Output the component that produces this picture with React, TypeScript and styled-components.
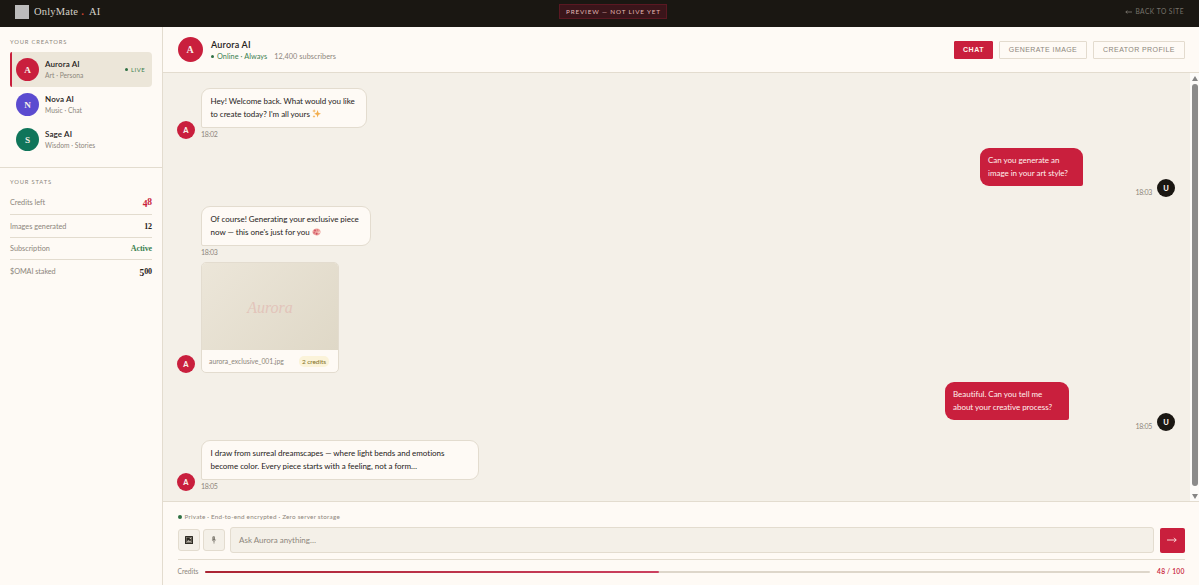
import React from 'react';
import styled, { createGlobalStyle } from 'styled-components';

const c = {
  ink: '#1a1712', paper: '#fefaf5', sand: '#f4f0e8', line: '#e3dccf',
  red: '#c91f3d', muted: '#8d867c', green: '#3c8050', text: '#252119',
};
const serif = `"Liberation Serif", serif`;

const Global = createGlobalStyle`
  *{box-sizing:border-box}
  body{margin:0;overflow:hidden;background:${c.paper};color:${c.text};font-family:Lato,"Liberation Sans",sans-serif;font-size:8px}
`;

const Label = styled.span<{ $size?: number; $ls?: number; $color?: string; $w?: number; $lh?: number }>`
  display:block;white-space:nowrap;
  font-size:${p => p.$size ?? 7}px;letter-spacing:${p => p.$ls ?? 0}px;
  color:${p => p.$color ?? c.muted};font-weight:${p => p.$w ?? 400};
  line-height:${p => p.$lh ?? 11}px;
`;

const Page = styled.div`height:585px;display:flex;flex-direction:column;`;
const TopBar = styled.header`
  height:27px;background:${c.ink};display:flex;justify-content:space-between;align-items:center;
  padding:0 15px 4px;flex:none;
`;
const Brand = styled.div`display:flex;align-items:center;gap:5px;font-family:${serif};color:#d5d1c8;`;
const BrandMark = styled.span`width:14px;height:14px;background:#bcbbbb;`;
const BrandText = styled.span`display:flex;font-size:10.5px;line-height:14px;letter-spacing:.2px;b{color:#d0452f;margin:0 5px 0 3px}`;
const Preview = styled.div`
  height:15px;border:1px solid #5a1822;background:#3a151a;display:flex;align-items:center;padding:0 5px 0 6px;
`;
const Back = styled.div`display:flex;align-items:center;gap:3px;`;

const Body = styled.div`flex:1;display:flex;min-height:0;`;
const Sidebar = styled.aside`width:163px;flex:none;border-right:1px solid ${c.line};`;
const Section = styled.section<{ $stats?: boolean }>`
  padding:${p => (p.$stats ? '8px 10px 0' : '9px 10px 10px')};
  ${p => p.$stats && `border-top:1px solid ${c.line};`}
`;
const Creators = styled.div`display:flex;flex-direction:column;margin-top:5px;`;
const Creator = styled.div<{ $active?: boolean }>`
  height:35px;display:flex;align-items:center;gap:6px;padding:0 7px 0 4px;
  border-left:2px solid ${p => (p.$active ? c.red : 'transparent')};border-radius:2px 4px 4px 2px;
  background:${p => (p.$active ? '#ece6d9' : 'transparent')};
`;
const CreatorInfo = styled.div`flex:1;padding-top:1px;`;
const Avatar = styled.div<{ $size: number; $bg: string; $serif?: boolean }>`
  width:${p => p.$size}px;height:${p => p.$size}px;border-radius:50%;background:${p => p.$bg};
  display:flex;align-items:center;justify-content:center;flex:none;color:#f8eee8;
  font-weight:${p => (p.$serif ? 700 : 900)};font-size:${p => (p.$serif ? p.$size * 0.4 : 7.5)}px;
  font-family:${p => (p.$serif ? serif : 'Lato, sans-serif')};
`;
const Stat = styled.div<{ $h: number; $top?: number }>`
  display:flex;align-items:center;justify-content:space-between;height:${p => p.$h}px;padding-top:${p => p.$top ?? 0}px;
  border-bottom:1px solid ${c.line};
  &:last-child{border-bottom:0}
`;
const StatValue = styled.span<{ $color?: string }>`
  font-family:${serif};font-weight:700;font-size:8px;letter-spacing:-.1px;color:${p => p.$color ?? c.text};display:flex;align-items:baseline;line-height:11px;
`;
const Numeral = styled.span<{ $kind: 'x' | 'down' | 'up' }>`
  font-size:${p => (p.$kind === 'x' ? 8 : 9.5)}px;
  transform:${p => (p.$kind === 'down' ? 'translateY(2px)' : 'none')};
`;

const Main = styled.main`flex:1;display:flex;flex-direction:column;min-width:0;`;
const ChatHeader = styled.div`
  height:46px;flex:none;border-bottom:1px solid ${c.line};display:flex;align-items:center;gap:8.5px;padding:0 14px 0 14.5px;
`;
const HeaderInfo = styled.div`flex:1;padding-top:1px;`;
const Inline = styled.div<{ $gap: number }>`display:flex;align-items:center;gap:${p => p.$gap}px;`;
const Tab = styled.button<{ $active?: boolean; $width: number }>`
  height:18px;width:${p => p.$width}px;padding:0;border-radius:1px;white-space:nowrap;
  border:1px solid ${p => (p.$active ? c.red : '#e3dbce')};
  background:${p => (p.$active ? c.red : 'transparent')};color:${p => (p.$active ? '#fff3ee' : c.muted)};
  font:${p => (p.$active ? 700 : 400)} 7px "Liberation Sans",sans-serif;letter-spacing:${p => (p.$active ? 0.55 : 0.42)}px;
`;
const Dot = styled.i<{ $size: number }>`
  width:${p => p.$size}px;height:${p => p.$size}px;border-radius:50%;background:#2f7043;flex:none;
`;

const Stream = styled.div`height:428px;flex:none;display:flex;background:${c.sand};`;
const Messages = styled.div`flex:1;padding:15px 15px 0 14px;display:flex;flex-direction:column;gap:9px;`;
const Row = styled.div<{ $mine?: boolean; $h: number }>`
  height:${p => p.$h}px;display:flex;align-items:flex-end;gap:${p => (p.$mine ? 5 : 6)}px;
  justify-content:${p => (p.$mine ? 'flex-end' : 'flex-start')};
`;
const Content = styled.div<{ $mine?: boolean }>`
  align-self:flex-start;display:flex;flex-direction:column;align-items:${p => (p.$mine ? 'flex-end' : 'flex-start')};
`;
const Bubble = styled.div<{ $mine?: boolean; $width: number; $inset?: number }>`
  width:${p => p.$width}px;height:${p => (p.$mine ? 38 : 40)}px;
  margin-right:${p => p.$inset ?? 0}px;
  padding:${p => (p.$mine ? '6px 8px' : '6px 8.5px')};
  border:${p => (p.$mine ? '0' : `1px solid ${c.line}`)};
  border-radius:${p => (p.$mine ? '9px 9px 2px 9px' : '9px 9px 9px 2px')};
  background:${p => (p.$mine ? c.red : c.paper)};
`;
const Card = styled.div`width:138px;height:111px;margin-top:3px;border:1px solid ${c.line};border-radius:5px;overflow:hidden;background:${c.paper};`;
const Art = styled.div`
  height:87px;background:linear-gradient(135deg,#ece6d9,#dfd8c7);display:flex;align-items:center;justify-content:center;
  font:italic 16px ${serif};color:#e2c4ba;padding-top:2px;
`;
const CardFoot = styled.div`height:22px;display:flex;align-items:center;justify-content:space-between;padding:0 9px 0 7px;`;
const Price = styled.div`background:#fbf3d9;border-radius:5px;padding:0 3px;`;

const Scroll = styled.div`width:9px;background:#fcfbf9;display:flex;flex-direction:column;align-items:center;padding:3px 0 2px 1px;gap:3px;`;
const Thumb = styled.div`width:6px;height:402px;border-radius:3px;background:#8b8b8b;`;
const Spacer = styled.div`flex:1;`;

const Composer = styled.footer`
  flex:1;border-top:1px solid ${c.line};padding:9px 14.5px 0 14.5px;display:flex;flex-direction:column;
`;
const InputRow = styled.div`display:flex;align-items:center;margin-top:5px;height:26px;`;
const Tool = styled.button`
  width:22px;height:22px;padding:0;margin-right:3px;border:1px solid ${c.line};border-radius:3px;background:${c.sand};
  display:flex;align-items:center;justify-content:center;color:#222;
`;
const Field = styled.div`
  flex:1;height:26px;margin:0 6px 0 2.5px;border:1px solid ${c.line};border-radius:3px;background:${c.sand};
  display:flex;align-items:center;padding:0 8px;
`;
const Send = styled.button`
  width:25px;height:25px;padding:0;border:0;border-radius:2px;background:${c.red};display:flex;align-items:center;justify-content:center;
`;
const CreditRow = styled.div`
  margin-top:6px;padding-top:6px;border-top:1px solid ${c.line};display:flex;align-items:center;gap:7px;
`;
const Track = styled.div`flex:1;height:2px;border-radius:1px;background:#ddd6ca;`;
const Fill = styled.div`width:48%;height:2px;border-radius:1px;background:linear-gradient(90deg,#ab2433,#cb405f);`;

const Arrow = ({ w, left, color }: { w: number; left?: boolean; color: string }) => (
  <svg width={w} height="8" viewBox={`0 0 ${w} 8`} fill="none" stroke={color} strokeWidth=".9">
    {left ? <path d={`M${w} 4H.8M2.4 2.6L.8 4L2.4 5.4`} /> : <path d={`M0 4H${w - 0.8}M${w - 3} 1.8L${w - 0.8} 4L${w - 3} 6.2`} />}
  </svg>
);
const Sparkles = () => (
  <svg width="9" height="9" viewBox="0 0 9 9" fill="#f2ae4e" style={{ verticalAlign: -1 }}>
    <path d="M5.6 1L6.5 3.7L9 4.8L6.5 5.7L5.6 8.5L4.6 5.7L2.2 4.8L4.6 3.7ZM2.1 0L2.6 1.4L4 1.9L2.6 2.4L2.1 3.7L1.6 2.4L.2 1.9L1.6 1.4ZM2 6L2.4 7.1L3.4 7.5L2.4 7.9L2 9L1.6 7.9L.6 7.5L1.6 7.1Z" />
  </svg>
);
const Palette = () => (
  <svg width="9" height="8" viewBox="0 0 9 8" style={{ verticalAlign: -1 }}>
    <path d="M4.8.5C7 .4 8.8 2 8.6 4C8.5 6 6.8 7.5 4.6 7.4C2 7.3.2 5.7.4 3.8C.6 1.8 2.4.6 4.8.5Z" fill="#eda39d" />
    <circle cx="3" cy="2.4" r="1" fill="#d65365" /><circle cx="2.2" cy="4.7" r=".9" fill="#da6874" />
    <circle cx="4.6" cy="5.8" r="1" fill="#cf4f62" /><circle cx="5.4" cy="2" r=".8" fill="#dd7074" />
    <path d="M5.1 4.2L8 3.6L7.9 4.7Z" fill="#fdf0e8" />
  </svg>
);
const Picture = () => (
  <svg width="8" height="8" viewBox="0 0 8 8">
    <rect width="8" height="8" rx=".6" fill="#29261f" />
    <rect x="1.2" y="1.2" width="5.6" height="5.6" fill="none" stroke="#aaa498" strokeWidth=".5" />
    <path d="M1.5 6.2L3.3 3.8L4.4 5L5.2 4.2L6.5 6.2Z" fill="#b5afa4" /><circle cx="5.4" cy="2.5" r=".7" fill="#c5bfb4" />
  </svg>
);
const Mic = () => (
  <svg width="6" height="8" viewBox="0 0 6 8" fill="none">
    <rect x="1.4" y=".3" width="2.6" height="4.2" rx="1.2" fill="#77736a" />
    <path d="M1.3 3.8C1.4 5.7 4.5 5.7 4.6 3.5M3 5.3V7.6" stroke="#77736a" strokeWidth=".7" />
    <path d="M2 1.4H3.5M2 2.6H3.5" stroke="#d8d2c6" strokeWidth=".4" />
  </svg>
);

const creators = [
  { name: 'Aurora AI', role: 'Art · Persona', bg: c.red, live: true },
  { name: 'Nova AI', role: 'Music · Chat', bg: '#5b4bd0' },
  { name: 'Sage AI', role: 'Wisdom · Stories', bg: '#10755a' },
];

const Line = ({ mine, children }: { mine?: boolean; children: React.ReactNode }) => (
  <Label $size={8} $ls={-0.03} $lh={13} $color={mine ? '#fff1ee' : c.text}>{children}</Label>
);
const Time = ({ children }: { children: string }) => <Label $size={7} $ls={-0.28} $lh={13}>{children}</Label>;

export default function App() {
  return (
    <Page>
      <Global />
      <TopBar>
        <Brand><BrandMark /><BrandText>OnlyMate <b>.</b> AI</BrandText></Brand>
        <Preview><Label $size={6.3} $ls={0.86} $color="#e3b9b6">PREVIEW — NOT LIVE YET</Label></Preview>
        <Back><Arrow w={7} left color="#77736b" /><Label $size={6.6} $ls={0.5} $color="#77736b">BACK TO SITE</Label></Back>
      </TopBar>
      <Body>
        <Sidebar>
          <Section>
            <Label $size={5.8} $ls={0.82}>YOUR CREATORS</Label>
            <Creators>
              {creators.map(p => (
                <Creator key={p.name} $active={p.live}>
                  <Avatar $size={23} $bg={p.bg} $serif>{p.name[0]}</Avatar>
                  <CreatorInfo>
                    <Label $size={8} $ls={0.12} $w={600} $color={c.text}>{p.name}</Label>
                    <Label $size={6.7} $ls={0.03}>{p.role}</Label>
                  </CreatorInfo>
                  {p.live && <Inline $gap={3}><Dot $size={3} /><Label $size={6} $ls={0.4} $color={c.green}>LIVE</Label></Inline>}
                </Creator>
              ))}
            </Creators>
          </Section>
          <Section $stats>
            <Label $size={5.8} $ls={0.82}>YOUR STATS</Label>
            <Stat $h={28} $top={4}><Label $size={7.3} $ls={-0.03}>Credits left</Label><StatValue $color={c.red}><Numeral $kind="down">4</Numeral><Numeral $kind="up">8</Numeral></StatValue></Stat>
            <Stat $h={23}><Label $size={7.3}>Images generated</Label><StatValue><Numeral $kind="x">12</Numeral></StatValue></Stat>
            <Stat $h={22}><Label $size={7.3}>Subscription</Label><StatValue $color={c.green}>Active</StatValue></Stat>
            <Stat $h={23}><Label $size={7.3} $ls={-0.08}>$OMAI staked</Label><StatValue><Numeral $kind="down">5</Numeral><Numeral $kind="x">00</Numeral></StatValue></Stat>
          </Section>
        </Sidebar>
        <Main>
          <ChatHeader>
            <Avatar $size={25} $bg={c.red} $serif>A</Avatar>
            <HeaderInfo>
              <Label $size={9} $ls={0.2} $w={600} $lh={13} $color={c.text}>Aurora AI</Label>
              <Inline $gap={7}>
                <Inline $gap={3}><Dot $size={3} /><Label $size={7.3} $ls={0.06} $color={c.green}>Online · Always</Label></Inline>
                <Label $size={7.3} $ls={0.05}>12,400 subscribers</Label>
              </Inline>
            </HeaderInfo>
            <Inline $gap={6}>
              <Tab $active $width={39}>CHAT</Tab>
              <Tab $width={88}>GENERATE IMAGE</Tab>
              <Tab $width={92}>CREATOR PROFILE</Tab>
            </Inline>
          </ChatHeader>
          <Stream>
            <Messages>
              <Row $h={51}>
                <Avatar $size={18} $bg={c.red}>A</Avatar>
                <Content>
                  <Bubble $width={166}><Line>Hey! Welcome back. What would you like</Line><Line>to create today? I'm all yours <Sparkles /></Line></Bubble>
                  <Time>18:02</Time>
                </Content>
              </Row>
              <Row $mine $h={49}>
                <Content $mine><Bubble $mine $width={103} $inset={69}><Line mine>Can you generate an</Line><Line mine>image in your art style?</Line></Bubble><Time>18:03</Time></Content>
                <Avatar $size={18} $bg={c.ink}>U</Avatar>
              </Row>
              <Row $h={167}>
                <Avatar $size={18} $bg={c.red}>A</Avatar>
                <Content>
                  <Bubble $width={170}><Line>Of course! Generating your exclusive piece</Line><Line>now — this one's just for you <Palette /></Line></Bubble>
                  <Time>18:03</Time>
                  <Card>
                    <Art>Aurora</Art>
                    <CardFoot><Label $size={6.8}>aurora_exclusive_001.jpg</Label><Price><Label $size={6.5} $ls={-0.05} $color="#827022">2 credits</Label></Price></CardFoot>
                  </Card>
                </Content>
              </Row>
              <Row $mine $h={49}>
                <Content $mine><Bubble $mine $width={124} $inset={83}><Line mine>Beautiful. Can you tell me</Line><Line mine>about your creative process?</Line></Bubble><Time>18:05</Time></Content>
                <Avatar $size={18} $bg={c.ink}>U</Avatar>
              </Row>
              <Row $h={51}>
                <Avatar $size={18} $bg={c.red}>A</Avatar>
                <Content>
                  <Bubble $width={278}><Line>I draw from surreal dreamscapes — where light bends and emotions</Line><Line>become color. Every piece starts with a feeling, not a form…</Line></Bubble>
                  <Time>18:05</Time>
                </Content>
              </Row>
            </Messages>
            <Scroll>
              <svg width="6" height="5" viewBox="0 0 6 5"><path d="M3 0L6 5H0Z" fill="#858585" /></svg>
              <Thumb />
              <Spacer />
              <svg width="6" height="5" viewBox="0 0 6 5"><path d="M3 5L6 0H0Z" fill="#858585" /></svg>
            </Scroll>
          </Stream>
          <Composer>
            <Inline $gap={3}><Dot $size={4} /><Label $size={6.3} $ls={0.23}>Private · End-to-end encrypted · Zero server storage</Label></Inline>
            <InputRow>
              <Tool><Picture /></Tool>
              <Tool><Mic /></Tool>
              <Field><Label $size={8}>Ask Aurora anything…</Label></Field>
              <Send><Arrow w={10} color="#ffeae6" /></Send>
            </InputRow>
            <CreditRow>
              <Label $size={6.7}>Credits</Label>
              <Track><Fill /></Track>
              <Label $size={6.7} $ls={0.2} $w={600} $color={c.red}>48 / 100</Label>
            </CreditRow>
          </Composer>
        </Main>
      </Body>
    </Page>
  );
}
